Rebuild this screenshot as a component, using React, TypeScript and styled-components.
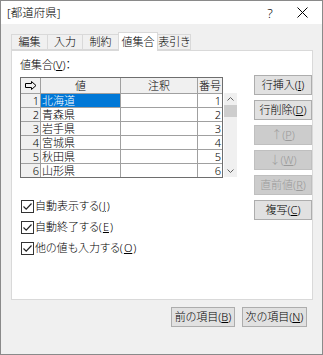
import styled, { createGlobalStyle } from "styled-components";

const GlobalStyle = createGlobalStyle`
  html, body { margin: 0; padding: 0; background: #fff; }
  body {
    font-family: "Noto Sans", "Noto Sans CJK JP", sans-serif;
    font-size: 11px;
    font-weight: 300;
    font-feature-settings: "palt";
    color: #000;
  }
  * { box-sizing: border-box; }
`;

const Window = styled.div`
  width: 323px;
  height: 355px;
  border: 1px solid #8a8a8a;
  display: flex;
  flex-direction: column;
  background: #f0f0f0;
`;

const TitleBar = styled.div`
  height: 23px;
  background: #fff;
  display: flex;
  align-items: center;
  padding-left: 6px;
  line-height: 16px;
  font-size: 11.5px;
`;

const Title = styled.div`
  flex: 1;
`;

const CaptionButton = styled.div`
  width: 32px;
  height: 23px;
  display: flex;
  align-items: center;
  justify-content: center;
  font-size: 13px;
  &:last-child { margin-right: 4px; }
`;

const Body = styled.div`
  flex: 1;
  display: flex;
  flex-direction: column;
  padding: 8px 9px 0 10px;
`;

const Tabs = styled.div`
  display: flex;
  align-items: flex-end;
  height: 18px;
  position: relative;
  z-index: 1;
`;

const Tab = styled.div<{ $active?: boolean; $w: number }>`
  width: ${({ $w }) => $w}px;
  height: ${({ $active }) => ($active ? 19 : 16)}px;
  margin-bottom: ${({ $active }) => ($active ? -1 : 0)}px;
  border: 1px solid #d9d9d9;
  border-bottom: ${({ $active }) => ($active ? "none" : "1px solid #d9d9d9")};
  margin-left: -1px;
  background: ${({ $active }) => ($active ? "#fff" : "#f0f0f0")};
  display: flex;
  align-items: center;
  justify-content: center;
  line-height: 14px;
  white-space: nowrap;
  &:first-child { margin-left: 0; }
`;

const Panel = styled.div`
  height: 250px;
  background: #fff;
  border: 1px solid #d9d9d9;
  display: flex;
  padding: 6px 14px 0 8px;
`;

const LeftCol = styled.div`
  display: flex;
  flex-direction: column;
  width: 218px;
`;

const Label = styled.div`
  line-height: 16px;
  height: 16px;
  margin-bottom: 4px;
`;

const GridWrap = styled.div`
  display: flex;
  align-items: flex-start;
  gap: 1px;
`;

const Grid = styled.div`
  display: grid;
  grid-template-columns: 19px 79px 76px 24px;
  grid-auto-rows: 13px;
  grid-template-rows: 15px;
  gap: 1px;
  background: #a0a0a0;
  border: 1px solid #6e6e6e;
  width: 203px;
  height: 101px;
  overflow: hidden;
`;

const Cell = styled.div<{ $head?: boolean; $align?: string; $sel?: boolean }>`
  background: ${({ $head, $sel }) => ($sel ? "#0078d7" : $head ? "#f0f0f0" : "#fff")};
  color: ${({ $sel }) => ($sel ? "#fff" : "#000")};
  display: flex;
  align-items: center;
  justify-content: ${({ $align }) =>
    $align === "right" ? "flex-end" : $align === "center" ? "center" : "flex-start"};
  padding: 0 1px 0 1px;
  line-height: 13px;
  white-space: nowrap;
  overflow: hidden;
`;

const ScrollBar = styled.div`
  margin-top: 16px;
  width: 13px;
  height: 84px;
  background: #f0f0f0;
  display: flex;
  flex-direction: column;
  align-items: center;
`;

const ScrollArrow = styled.div`
  height: 12px;
  width: 13px;
  display: flex;
  align-items: center;
  justify-content: center;
`;

const Thumb = styled.div`
  width: 13px;
  height: 12px;
  background: #cdcdcd;
`;

const Spacer = styled.div`
  flex: 1;
`;

const Checks = styled.div`
  margin-top: 20px;
  display: flex;
  flex-direction: column;
  gap: 5px;
`;

const CheckRow = styled.label`
  display: flex;
  align-items: center;
  gap: 1px;
  height: 16px;
  line-height: 16px;
  padding-left: 1px;
`;

const Box = styled.span`
  width: 13px;
  height: 13px;
  border: 1px solid #333;
  background: #fff;
  display: flex;
  align-items: center;
  justify-content: center;
`;

const RightCol = styled.div`
  margin-top: 18px;
  margin-left: 17px;
  display: flex;
  flex-direction: column;
  gap: 5px;
`;

const Button = styled.div<{ $disabled?: boolean; $w?: number }>`
  width: ${({ $w }) => $w || 58}px;
  height: 20px;
  border: 1px solid ${({ $disabled }) => ($disabled ? "#bfbfbf" : "#adadad")};
  background: ${({ $disabled }) => ($disabled ? "#cccccc" : "#e1e1e1")};
  color: ${({ $disabled }) => ($disabled ? "#9a9a9a" : "#000")};
  display: flex;
  align-items: center;
  justify-content: center;
  line-height: 14px;
  white-space: nowrap;
`;

const Footer = styled.div`
  display: flex;
  justify-content: flex-end;
  gap: 7px;
  padding: 7px 6px 0 0;
`;

const arrowIcon = (
  <svg width="12" height="9" viewBox="0 0 12 9">
    <path d="M0.5 2.5H6.5V0.5L11 4.5L6.5 8.5V6.5H0.5Z" fill="none" stroke="#000" strokeWidth="1" />
  </svg>
);

const check = (
  <svg width="11" height="11" viewBox="0 0 11 11">
    <path d="M1.5 5.5L4.2 8.2L9.5 2.5" fill="none" stroke="#222" strokeWidth="1.2" />
  </svg>
);

const rows = ["北海道", "青森県", "岩手県", "宮城県", "秋田県", "山形県"];

export default function App() {
  return (
    <>
      <GlobalStyle />
      <Window>
        <TitleBar>
          <Title>[都道府県]</Title>
          <CaptionButton>?</CaptionButton>
          <CaptionButton>
            <svg width="11" height="11" viewBox="0 0 11 11">
              <path d="M0.5 0.5L10.5 10.5M10.5 0.5L0.5 10.5" stroke="#000" strokeWidth="1" />
            </svg>
          </CaptionButton>
        </TitleBar>
        <Body>
          <Tabs>
            <Tab $w={37}>編集</Tab>
            <Tab $w={36}>入力</Tab>
            <Tab $w={37}>制約</Tab>
            <Tab $w={40} $active>値集合</Tab>
            <Tab $w={34}>表引き</Tab>
          </Tabs>
          <Panel>
            <LeftCol>
              <Label>
                値集合(<u>V</u>)：
              </Label>
              <GridWrap>
                <Grid>
                  <Cell $head $align="center">{arrowIcon}</Cell>
                  <Cell $head $align="center">値</Cell>
                  <Cell $head $align="center">注釈</Cell>
                  <Cell $head $align="center">番号</Cell>
                  {rows.map((name, i) => (
                    <>
                      <Cell key={`h${i}`} $head $align="right">{i + 1}</Cell>
                      <Cell key={`v${i}`} $sel={i === 0}>{name}</Cell>
                      <Cell key={`n${i}`} />
                      <Cell key={`o${i}`} $align="right">{i + 1}</Cell>
                    </>
                  ))}
                </Grid>
                <ScrollBar>
                  <ScrollArrow>
                    <svg width="7" height="4" viewBox="0 0 7 4">
                      <path d="M0.5 3.5L3.5 0.5L6.5 3.5" fill="none" stroke="#606060" />
                    </svg>
                  </ScrollArrow>
                  <Thumb />
                  <Spacer />
                  <ScrollArrow>
                    <svg width="7" height="4" viewBox="0 0 7 4">
                      <path d="M0.5 0.5L3.5 3.5L6.5 0.5" fill="none" stroke="#606060" />
                    </svg>
                  </ScrollArrow>
                </ScrollBar>
              </GridWrap>
              <Checks>
                <CheckRow>
                  <Box>{check}</Box>自動表示する(<u>J</u>)
                </CheckRow>
                <CheckRow>
                  <Box>{check}</Box>自動終了する(<u>E</u>)
                </CheckRow>
                <CheckRow>
                  <Box>{check}</Box>他の値も入力する(<u>O</u>)
                </CheckRow>
              </Checks>
            </LeftCol>
            <RightCol>
              <Button>行挿入(<u>I</u>)</Button>
              <Button>行削除(<u>D</u>)</Button>
              <Button $disabled>↑(<u>P</u>)</Button>
              <Button $disabled>↓(<u>W</u>)</Button>
              <Button $disabled>直前値(<u>R</u>)</Button>
              <Button>複写(<u>C</u>)</Button>
            </RightCol>
          </Panel>
          <Footer>
            <Button $w={64}>前の項目(<u>B</u>)</Button>
            <Button $w={65}>次の項目(<u>N</u>)</Button>
          </Footer>
        </Body>
      </Window>
    </>
  );
}
